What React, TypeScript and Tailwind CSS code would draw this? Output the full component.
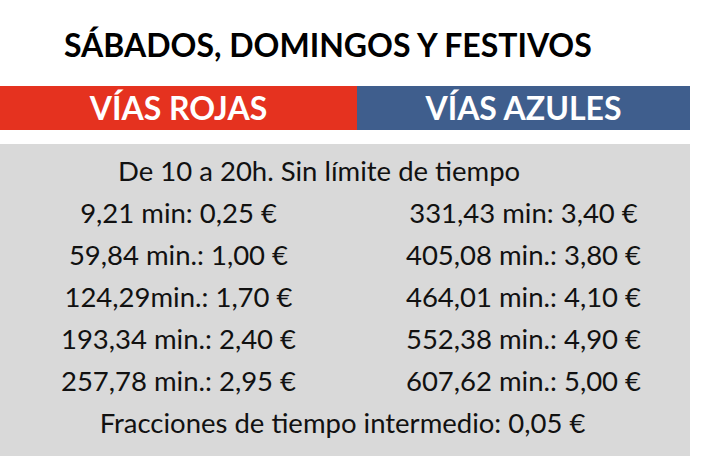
const rows: [string, string][] = [
  ["9,21 min: 0,25 €", "331,43 min: 3,40 €"],
  ["59,84 min.: 1,00 €", "405,08 min.: 3,80 €"],
  ["124,29min.: 1,70 €", "464,01 min.: 4,10 €"],
  ["193,34 min.: 2,40 €", "552,38 min.: 4,90 €"],
  ["257,78 min.: 2,95 €", "607,62 min.: 5,00 €"],
];

export default function App() {
  return (
    <div className="w-[704px] h-[456px] bg-white overflow-hidden font-['Lato','Liberation_Sans',sans-serif] text-[#111]">
      <div className="h-[86px] pl-[64px] pt-[26px]">
        <h1 className="text-[32px] font-bold leading-[38px] tracking-[0px] text-black">
          SÁBADOS, DOMINGOS Y FESTIVOS
        </h1>
      </div>
      <div className="flex w-[690px] h-[44px]">
        <div className="w-[357px] flex items-center justify-center bg-[#e5321f] text-white text-[32px] font-bold">
          VÍAS ROJAS
        </div>
        <div className="flex-1 flex items-center justify-center bg-[#3f5e8d] text-white text-[32px] font-bold">
          VÍAS AZULES
        </div>
      </div>
      <div className="mt-[14px] w-[690px] h-[312px] pt-[6px] bg-[#d9d9d9] text-[27.5px] leading-[42px]">
        <div className="h-[42px] pl-[118px]">
          De 10 a 20h. Sin límite de tiempo
        </div>
        {rows.map(([l, r]) => (
          <div key={l} className="grid grid-cols-[357px_1fr] h-[42px]">
            <div className="text-center">{l}</div>
            <div className="text-center">{r}</div>
          </div>
        ))}
        <div className="h-[42px] text-center pr-[5px]">
          Fracciones de tiempo intermedio: 0,05 €
        </div>
      </div>
    </div>
  );
}
